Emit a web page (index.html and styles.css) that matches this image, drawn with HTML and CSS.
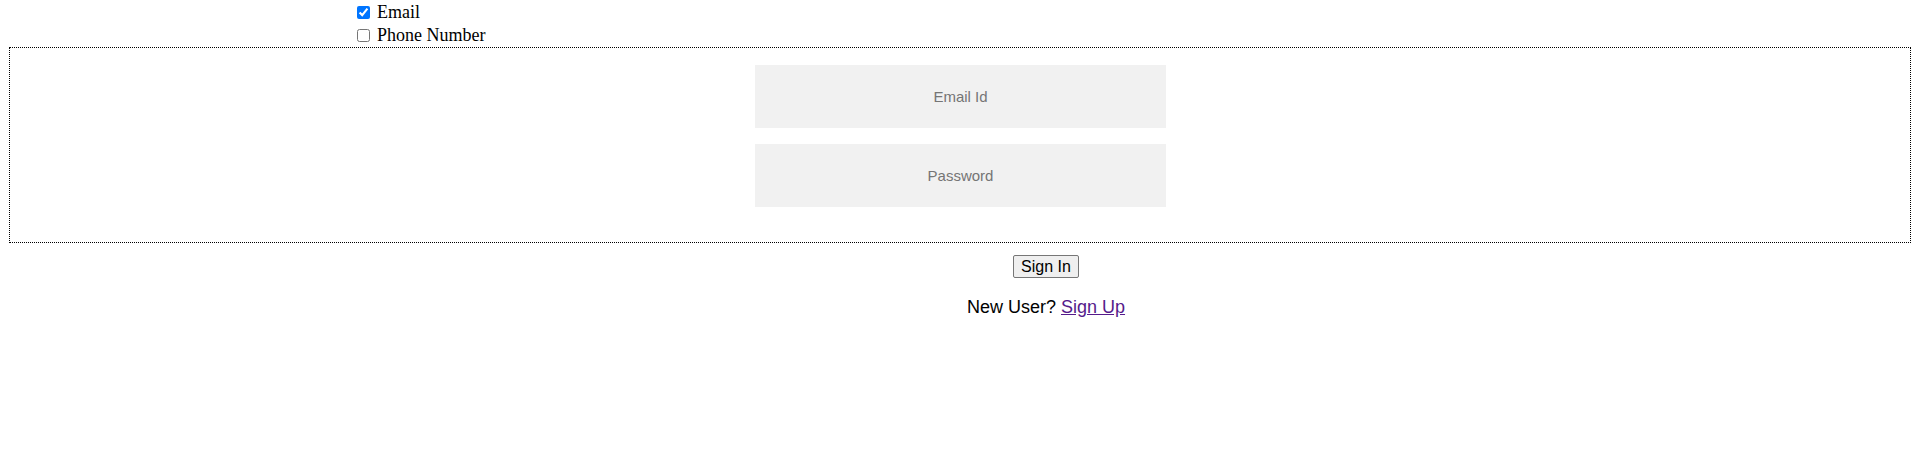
FILE: index.html
```html
<!DOCTYPE html>
<html lang="en">
<head>
<meta charset="utf-8">
<title>Sign In</title>
<link rel="stylesheet" href="styles.css">
</head>
<body>
  <div class="options">
    <label class="opt"><input type="checkbox" class="chk" checked><span>Email</span></label>
    <label class="opt"><input type="checkbox" class="chk"><span>Phone Number</span></label>
  </div>
  <div class="fields">
    <input class="field" type="text" placeholder="Email Id">
    <input class="field" type="password" placeholder="Password">
  </div>
  <div class="actions">
    <button class="btn" type="button">Sign In</button>
    <p class="signup">New User? <a class="link" href="#">Sign Up</a></p>
  </div>
</body>
</html>
```

FILE: styles.css
```css
html, body {
  background: #ffffff;
}
body {
  margin: 0;
  padding-top: 1px;
  font-family: "Liberation Serif", "Times New Roman", serif;
  font-size: 18px;
  color: #000;
}
.options {
  display: flex;
  flex-direction: column;
  padding-left: 353px;
}
.opt {
  display: flex;
  align-items: center;
  height: 23px;
  line-height: 23px;
}
.chk {
  width: 13px;
  height: 13px;
  margin: 0 7px 0 4px;
  accent-color: #0075ff;
}
.fields {
  margin: 0 9px;
  border: 1px dotted #000;
  display: flex;
  flex-direction: column;
  align-items: center;
  gap: 16px;
  padding: 17px 0 35px;
}
.field {
  box-sizing: border-box;
  width: 411px;
  height: 63px;
  border: none;
  outline: none;
  background: #f1f1f1;
  text-align: center;
  font-family: "Liberation Sans", Arial, sans-serif;
  font-size: 15px;
  color: #000;
  margin-left: 1px;
}
.field::placeholder {
  color: #757575;
}
.actions {
  padding-left: 172px;
  padding-top: 12px;
  display: flex;
  flex-direction: column;
  align-items: center;
  font-family: "Liberation Sans", Arial, sans-serif;
}
.btn {
  font-family: "Liberation Sans", Arial, sans-serif;
  font-size: 16px;
  line-height: 19px;
  padding: 1px 7px;
  border: 1px solid #767676;
  border-radius: 2px;
  background: #efefef;
  color: #000;
}
.signup {
  margin: 19px 0 0;
  font-size: 18px;
  line-height: 21px;
}
.link {
  color: #551a8b;
}
```
